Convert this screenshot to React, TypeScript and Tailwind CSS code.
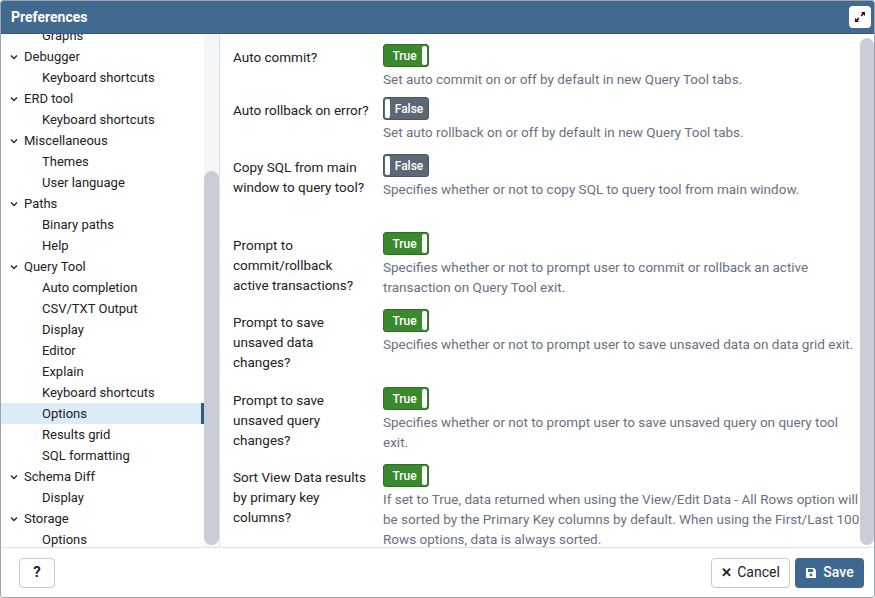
import React from 'react';

const tree: { label: string; level: number; selected?: boolean }[] = [
  { label: 'Graphs', level: 1 },
  { label: 'Debugger', level: 0 },
  { label: 'Keyboard shortcuts', level: 1 },
  { label: 'ERD tool', level: 0 },
  { label: 'Keyboard shortcuts', level: 1 },
  { label: 'Miscellaneous', level: 0 },
  { label: 'Themes', level: 1 },
  { label: 'User language', level: 1 },
  { label: 'Paths', level: 0 },
  { label: 'Binary paths', level: 1 },
  { label: 'Help', level: 1 },
  { label: 'Query Tool', level: 0 },
  { label: 'Auto completion', level: 1 },
  { label: 'CSV/TXT Output', level: 1 },
  { label: 'Display', level: 1 },
  { label: 'Editor', level: 1 },
  { label: 'Explain', level: 1 },
  { label: 'Keyboard shortcuts', level: 1 },
  { label: 'Options', level: 1, selected: true },
  { label: 'Results grid', level: 1 },
  { label: 'SQL formatting', level: 1 },
  { label: 'Schema Diff', level: 0 },
  { label: 'Display', level: 1 },
  { label: 'Storage', level: 0 },
  { label: 'Options', level: 1 },
];

const prefs = [
  { label: 'Auto commit?', on: true, desc: 'Set auto commit on or off by default in new Query Tool tabs.', h: 'h-[53px]' },
  { label: 'Auto rollback on error?', on: false, desc: 'Set auto rollback on or off by default in new Query Tool tabs.', h: 'h-[57px]' },
  { label: 'Copy SQL from main window to query tool?', on: false, desc: 'Specifies whether or not to copy SQL to query tool from main window.', h: 'h-[78px]' },
  { label: 'Prompt to commit/rollback active transactions?', on: true, desc: 'Specifies whether or not to prompt user to commit or rollback an active transaction on Query Tool exit.', h: 'h-[77px]' },
  { label: 'Prompt to save unsaved data changes?', on: true, desc: 'Specifies whether or not to prompt user to save unsaved data on data grid exit.', h: 'h-[78px]' },
  { label: 'Prompt to save unsaved query changes?', on: true, desc: 'Specifies whether or not to prompt user to save unsaved query on query tool exit.', h: 'h-[77px]' },
  { label: 'Sort View Data results by primary key columns?', on: true, desc: 'If set to True, data returned when using the View/Edit Data - All Rows option will be sorted by the Primary Key columns by default. When using the First/Last 100 Rows options, data is always sorted.', h: 'h-[90px]' },
];

function Toggle({ on }: { on: boolean }) {
  return on ? (
    <div className="flex h-[23px] w-[46px] items-center rounded-[3px] border border-[#2f6e24] bg-[#3a8a2d] pl-[3px]">
      <span className="flex-1 text-center text-[12px] font-medium text-white">True</span>
      <span className="mr-[1px] h-[19px] w-[5px] rounded-[2px] bg-white" />
    </div>
  ) : (
    <div className="flex h-[23px] w-[46px] items-center rounded-[3px] border border-[#4b5563] bg-[#5d6877]">
      <span className="ml-[1px] h-[19px] w-[5px] rounded-[2px] bg-white" />
      <span className="flex-1 text-center text-[12px] font-medium text-white">False</span>
    </div>
  );
}

export default function App() {
  return (
    <div className="flex h-[598px] w-[875px] flex-col overflow-hidden rounded-[3px] border border-[#9ca3af] bg-white [font-family:Roboto,sans-serif]">
      <div className="flex h-[33px] shrink-0 items-center justify-between border-b border-[#2d5a86] bg-[#426a8f] pl-[10px] pr-[3px]">
        <span className="text-[14px] font-bold text-white">Preferences</span>
        <div className="flex h-[22px] w-[22px] items-center justify-center rounded-[4px] bg-white">
          <svg width="12" height="12" viewBox="0 0 12 12" fill="#111">
            <path d="M7 1h4v4L9.6 3.6 7.8 5.4 6.6 4.2 8.4 2.4z" />
            <path d="M5 11H1V7l1.4 1.4 1.8-1.8 1.2 1.2-1.8 1.8z" />
          </svg>
        </div>
      </div>
      <div className="flex min-h-0 flex-1">
        <div className="flex w-[219px] shrink-0 border-r border-[#dde0e6]">
          <div className="w-[204px] overflow-hidden">
            <div className="mt-[-9px]">
              {tree.map((t, i) => (
                <div
                  key={i}
                  className={`flex h-[21px] items-center text-[13px] text-[#222] ${t.selected ? 'border-r-[3px] border-[#2f5c86] bg-[#dcebf8]' : ''}`}
                >
                  {t.level === 0 ? (
                    <>
                      <svg className="ml-[9px] mr-[6px]" width="8" height="6" viewBox="0 0 8 6">
                        <path d="M1 1.5l3 3 3-3" stroke="#222" strokeWidth="1.3" fill="none" />
                      </svg>
                      <span>{t.label}</span>
                    </>
                  ) : (
                    <span className="pl-[41px]">{t.label}</span>
                  )}
                </div>
              ))}
            </div>
          </div>
          <div className="flex w-[15px] justify-center bg-[#f5f6f8] pt-[137px] pb-[2px]">
            <div className="w-[8px] flex-1 rounded-full bg-[#c9ced6]" />
          </div>
        </div>
        <div className="flex min-w-0 flex-1">
          <div className="flex-1 pl-[13px] pt-[10px]">
            {prefs.map((p, i) => (
              <div key={i} className={`flex ${p.h}`}>
                <div className="w-[150px] shrink-0 pt-[3px] pr-[12px] text-[13.5px] leading-[20px] text-[#222]">{p.label}</div>
                <div className="flex-1">
                  <Toggle on={p.on} />
                  <div className="mt-[2px] text-[13.5px] leading-[20px] text-[#6b7080]">{p.desc}</div>
                </div>
              </div>
            ))}
          </div>
          <div className="flex w-[14px] shrink-0 justify-center pt-[4px] pb-[2px]">
            <div className="w-[8px] flex-1 rounded-full bg-[#c9ced6]" />
          </div>
        </div>
      </div>
      <div className="flex h-[50px] shrink-0 items-center justify-between border-t border-[#dde0e6] px-[18px] pr-[10px]">
        <button className="flex h-[30px] w-[36px] items-center justify-center rounded-[4px] border border-[#c5cad2] bg-white text-[15px] font-bold text-[#222]">?</button>
        <div className="flex gap-[5px]">
          <button className="flex h-[30px] w-[79px] items-center justify-center gap-[5px] rounded-[4px] border border-[#c5cad2] bg-white text-[14px] text-[#222]">
            <span className="text-[13px] font-bold">✕</span>Cancel
          </button>
          <button className="flex h-[30px] w-[69px] items-center justify-center gap-[6px] rounded-[4px] bg-[#3e6890] text-[14px] font-medium text-white">
            <svg width="12" height="12" viewBox="0 0 12 12"><path d="M1 1h8l2 2v8H1z" fill="white" /><rect x="3" y="2" width="5" height="3" fill="#3e6890" /><circle cx="6" cy="8" r="1.4" fill="#3e6890" /></svg>
            Save
          </button>
        </div>
      </div>
    </div>
  );
}
